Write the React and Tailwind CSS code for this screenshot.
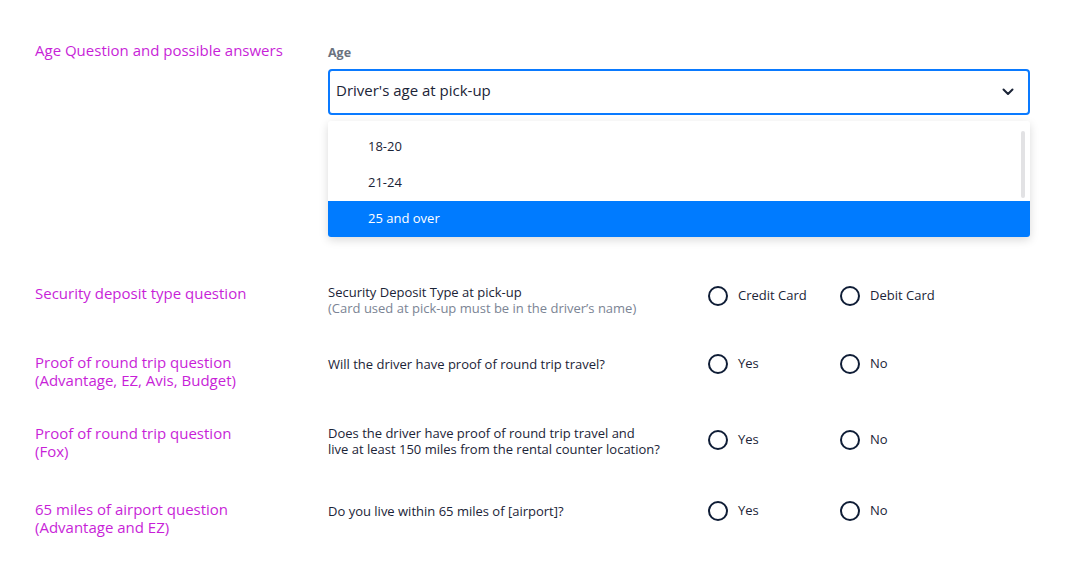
import React from "react";

const font = { fontFamily: "'Open Sans', Lato, sans-serif" };

const Radio = ({ label }) => (
  <label className="flex w-[132px] items-center gap-[10px]">
    <span className="h-[20px] w-[20px] rounded-full border-2 border-[#0f1d36]" />
    <span className="text-[13px] font-medium text-[#1b2437]">{label}</span>
  </label>
);

const Row = ({ title, question, sub, options, h, qTop, rTop }) => (
  <div className="flex" style={{ height: h }}>
    <div className="w-[293px] text-[15px] leading-[18px] text-[#c81fd8]">
      {title.map((line) => <p key={line}>{line}</p>)}
    </div>
    <div className="flex items-start">
      <div className="w-[380px] text-[13px] leading-[16px] font-medium text-[#1b2437]" style={{ marginTop: qTop }}>
        {question.map((line) => <p key={line}>{line}</p>)}
        {sub && <p className="font-normal text-[#7b8494]">{sub}</p>}
      </div>
      <div className="flex" style={{ marginTop: rTop }}>
        {options.map((o) => <Radio key={o} label={o} />)}
      </div>
    </div>
  </div>
);

export default function App() {
  return (
    <div className="min-h-[578px] w-[1068px] bg-white pl-[35px] pt-[41px]" style={font}>
      <div className="flex h-[243px]">
        <div className="w-[293px] text-[15px] leading-[18px] text-[#c81fd8]">Age Question and possible answers</div>
        <div className="w-[702px] pt-[4px]">
          <p className="text-[12.5px] leading-[16px] font-bold text-[#6b7280]">Age</p>
          <div className="mt-[8px] flex h-[46px] items-center justify-between rounded-[4px] border-2 border-[#0a7aff] pl-[6px] pr-[14px]">
            <span className="pb-[3px] text-[15px] font-medium text-[#1b2437]">Driver's age at pick-up</span>
            <svg width="12" height="8" viewBox="0 0 12 8" fill="none">
              <path d="M1.5 1.5 6 6l4.5-4.5" stroke="#1b2437" strokeWidth="2" strokeLinecap="round" strokeLinejoin="round" />
            </svg>
          </div>
          <div className="relative mt-[6px] h-[116px] overflow-hidden rounded-[3px] bg-white pt-[8px] shadow-[0_3px_10px_rgba(0,0,0,0.15)]">
            {["18-20", "21-24"].map((o) => (
              <div key={o} className="flex h-[36px] items-center pl-[40px] text-[13px] font-medium text-[#1b2437]">{o}</div>
            ))}
            <div className="flex h-[36px] items-center bg-[#007bff] pl-[40px] text-[13px] font-medium text-white">25 and over</div>
            <div className="absolute right-[5px] top-[10px] h-[67px] w-[4px] rounded-full bg-[#e2e2e4]" />
          </div>
        </div>
      </div>

      <Row
        title={["Security deposit type question"]}
        question={["Security Deposit Type at pick-up"]}
        sub="(Card used at pick-up must be in the driver’s name)"
        options={["Credit Card", "Debit Card"]}
        h={69}
        qTop={0}
        rTop={2}
      />
      <Row
        title={["Proof of round trip question", "(Advantage, EZ, Avis, Budget)"]}
        question={["Will the driver have proof of round trip travel?"]}
        options={["Yes", "No"]}
        h={71}
        qTop={3}
        rTop={1}
      />
      <Row
        title={["Proof of round trip question", "(Fox)"]}
        question={["Does the driver have proof of round trip travel and", "live at least 150 miles from the rental counter location?"]}
        options={["Yes", "No"]}
        h={76}
        qTop={1}
        rTop={6}
      />
      <Row
        title={["65 miles of airport question", "(Advantage and EZ)"]}
        question={["Do you live within 65 miles of [airport]?"]}
        options={["Yes", "No"]}
        h={60}
        qTop={3}
        rTop={1}
      />
    </div>
  );
}
